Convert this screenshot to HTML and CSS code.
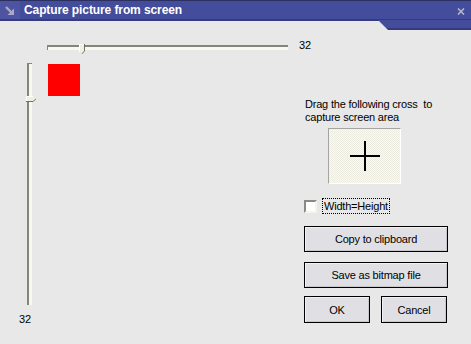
FILE: index.html
```html
<!DOCTYPE html>
<html lang="en">
<head>
    <meta charset="utf-8" />
    <title>Capture picture from screen</title>
    <link rel="stylesheet" href="styles.css">
</head>
<body>
    <div class="window">
        <div class="titlebar">
            <span class="ticon">
                <svg width="10" height="10" viewBox="0 0 10 10">
                    <path d="M1 1L6.5 6.5" stroke="#a9a9c4" stroke-width="2.4" fill="none" />
                    <path d="M9 2.5V9H2.5Z" fill="#a9a9c4" />
                </svg>
            </span>
            <span class="ttext">Capture picture from screen</span>
            <span class="tclose">
                <svg width="8" height="7" viewBox="0 0 8 7">
                    <path d="M1 0.5L7 6.5M7 0.5L1 6.5" stroke="#b4b4cc" stroke-width="1.6" fill="none" />
                </svg>
            </span>
        </div>
        <div class="main">
            <div class="hrow">
                <div class="htrack">
                    <span class="hthumb">
                        <svg width="6" height="10" viewBox="0 0 6 10">
                            <path d="M0 0H5V7L2.5 9.5 0 7Z" fill="#efefe2" />
                            <path d="M0.5 8V0.5H4.5" stroke="#fff" fill="none" />
                            <path d="M5.5 0V7.2L2.6 10" stroke="#707066" fill="none" />
                        </svg>
                    </span>
                </div>
                <span class="val">32</span>
            </div>
            <div class="lower">
                <div class="vcol">
                    <div class="vtrack">
                        <span class="vthumb">
                            <svg width="10" height="6" viewBox="0 0 10 6">
                                <path d="M0 0H7L9.5 2.5 7 5H0Z" fill="#efefe2" />
                                <path d="M0.5 5V0.5H7" stroke="#fff" fill="none" />
                                <path d="M0 5.5H7.2L10 2.6" stroke="#707066" fill="none" />
                            </svg>
                        </span>
                    </div>
                    <span class="val vval">32</span>
                </div>
                <div class="preview">
                    <div class="swatch"></div>
                </div>
                <div class="side">
                    <div class="hint">Drag the following cross&nbsp; to capture screen area</div>
                    <div class="crossbox">
                        <svg width="32" height="30" viewBox="0 0 32 30">
                            <path d="M1 15H31M16 0V30" stroke="#000" stroke-width="2" fill="none" />
                        </svg>
                    </div>
                    <label class="checkrow">
                        <span class="checkbox"></span>
                        <span class="checklabel">Width=Height</span>
                    </label>
                    <button class="btn wide first">Copy to clipboard</button>
                    <button class="btn wide second">Save as bitmap file</button>
                    <div class="btnrow">
                        <button class="btn small">OK</button>
                        <button class="btn small">Cancel</button>
                    </div>
                </div>
            </div>
        </div>
    </div>
</body>
</html>
```

FILE: styles.css
```css
html,
body {
    margin: 0;
    padding: 0;
}
body {
    font-family: "Liberation Sans", Arial, sans-serif;
    font-size: 11px;
    letter-spacing: -0.2px;
    color: #000;
    background-color: #e8e8e8;
}
.window {
    position: relative;
    width: 471px;
    height: 344px;
    overflow: hidden;
    background-color: #e8e8e8;
}
/* 标题栏 */
.titlebar {
    position: relative;
    display: flex;
    align-items: center;
    height: 21px;
    box-sizing: border-box;
    border-top: 1px solid #2c3060;
    border-bottom: 2px solid #353b7e;
    background-color: #444c9c;
    color: #fff;
}
.titlebar::after {
    content: '';
    position: absolute;
    top: 19px;
    left: 378px;
    right: 0;
    height: 10px;
    background: linear-gradient(to bottom, #444c9c 0, #444c9c 8px, #353b7e 8px);
    clip-path: polygon(0 0, 100% 0, 100% 100%, 10px 100%);
}
.ticon {
    display: flex;
    align-items: center;
    justify-content: center;
    width: 20px;
    height: 18px;
    background-color: #4e54a2;
}
.ticon svg {
    margin: 2px 0 0 0;
}
.ttext {
    margin-left: 4px;
    font-size: 12px;
    font-weight: bold;
    letter-spacing: -0.1px;
}
.tclose {
    display: flex;
    margin-left: auto;
    margin-right: 6px;
    margin-top: 2px;
}
/* 滑块 */
.hrow {
    display: flex;
    align-items: flex-start;
    margin-top: 24px;
    padding-left: 47px;
}
.htrack {
    position: relative;
    width: 241px;
    height: 5px;
    box-sizing: border-box;
    border-top: 2px solid #858579;
    border-left: 1px solid #858579;
    background-color: #f8f8f0;
}
.hthumb {
    position: absolute;
    top: -3px;
    left: 31px;
    display: flex;
}
.val {
    line-height: 13px;
}
.hrow .val {
    margin-left: 11px;
    margin-top: -6px;
}
.lower {
    display: flex;
    margin-top: 11px;
}
.vcol {
    display: flex;
    flex-direction: column;
    width: 47px;
}
.vtrack {
    position: relative;
    width: 5px;
    height: 242px;
    margin-left: 27px;
    box-sizing: border-box;
    border-left: 2px solid #858579;
    border-top: 1px solid #858579;
    background-color: #f8f8f0;
}
.vthumb {
    position: absolute;
    top: 32px;
    left: -3px;
    display: flex;
}
.vval {
    margin-top: 8px;
    margin-left: 19px;
}
.preview {
    flex: 1;
}
.swatch {
    width: 32px;
    height: 32px;
    margin: 1px 0 0 1px;
    background-color: #f00;
}
/* 右侧 */
.side {
    width: 144px;
    margin-right: 23px;
    padding-top: 35px;
}
.hint {
    padding-left: 1px;
    line-height: 13px;
}
.crossbox {
    display: flex;
    align-items: center;
    justify-content: center;
    width: 73px;
    height: 56px;
    margin: 4px 0 0 24px;
    box-sizing: border-box;
    border: 1px solid;
    border-color: #a4a4a0 #fff #fff #a4a4a0;
    background-color: #f4f4ec;
    background-image: repeating-conic-gradient(#fbfbf6 0 25%, #ebebe0 0 50%);
    background-size: 2px 2px;
}
.checkrow {
    display: flex;
    align-items: center;
    height: 16px;
    margin-top: 14px;
}
.checkbox {
    width: 13px;
    height: 13px;
    box-sizing: border-box;
    border: 2px solid;
    border-color: #8a8a84 #f4f4f0 #f4f4f0 #8a8a84;
    background-color: #fff;
}
.checklabel {
    margin-left: 5px;
    padding: 0 1px;
    line-height: 14px;
    border: 1px dotted #000;
}
.btn {
    display: block;
    box-sizing: border-box;
    font-family: "Liberation Sans", Arial, sans-serif;
    font-size: 11px;
    letter-spacing: -0.2px;
    color: #000;
    border: 1px solid #000;
    background-color: #e0e0e4;
    box-shadow: inset 1px 1px 0 #f2f2f4, inset -1px -1px 0 #c8c8cc;
    padding: 0;
    outline: none;
}
.wide {
    width: 144px;
    height: 26px;
}
.first {
    margin-top: 12px;
}
.second {
    margin-top: 10px;
}
.btnrow {
    display: flex;
    justify-content: space-between;
    width: 143px;
    margin-top: 8px;
}
.small {
    width: 66px;
    height: 27px;
}
```
